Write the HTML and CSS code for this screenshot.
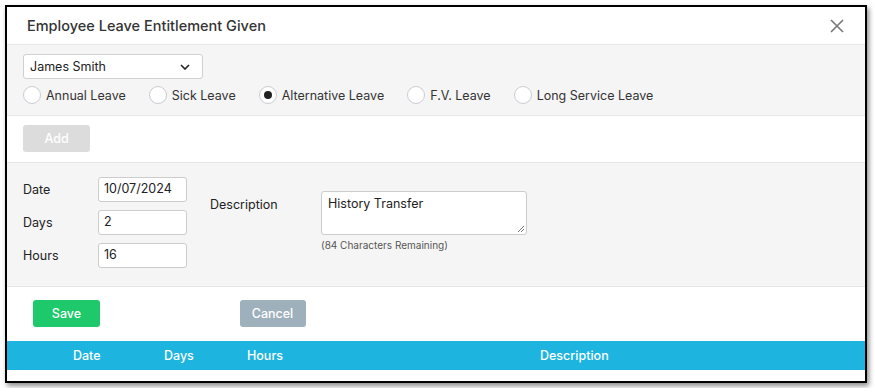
FILE: index.html
```html
<!DOCTYPE html>
<html lang="en">
<head>
    <meta charset="UTF-8">
    <title>Employee Leave Entitlement Given</title>
    <link rel="stylesheet" href="styles.css">
</head>
<body>

<div class="modal">
    <!-- Header -->
    <div class="modal-header">
        <div class="modal-title">Employee Leave Entitlement Given</div>
        <button class="close-button" aria-label="Close">
            <svg width="14" height="14" viewBox="0 0 14 14">
                <path d="M1 1 L13 13 M13 1 L1 13" stroke="#777" stroke-width="1.6" fill="none"/>
            </svg>
        </button>
    </div>

    <!-- Employee + leave type -->
    <div class="section section-gray select-section">
        <div class="select-box">
            <span>James Smith</span>
            <svg width="10" height="6" viewBox="0 0 10 6">
                <path d="M1 1 L5 5 L9 1" stroke="#222" stroke-width="1.6" fill="none"/>
            </svg>
        </div>
        <div class="radio-row">
            <label class="radio"><span class="radio-circle"></span>Annual Leave</label>
            <label class="radio"><span class="radio-circle"></span>Sick Leave</label>
            <label class="radio"><span class="radio-circle checked"></span>Alternative Leave</label>
            <label class="radio"><span class="radio-circle"></span>F.V. Leave</label>
            <label class="radio"><span class="radio-circle"></span>Long Service Leave</label>
        </div>
    </div>

    <div class="section add-section">
        <button class="btn btn-disabled">Add</button>
    </div>

    <!-- Entry form -->
    <div class="section section-gray form-section">
        <div class="field-column">
            <div class="field-row">
                <span class="field-label">Date</span>
                <div class="text-input">10/07/2024</div>
            </div>
            <div class="field-row">
                <span class="field-label">Days</span>
                <div class="text-input">2</div>
            </div>
            <div class="field-row">
                <span class="field-label">Hours</span>
                <div class="text-input">16</div>
            </div>
        </div>
        <div class="description-block">
            <span class="field-label description-label">Description</span>
            <div>
                <div class="textarea">
                    History Transfer
                    <svg class="resize-grip" width="7" height="7" viewBox="0 0 7 7">
                        <path d="M7 1 L1 7 M7 4 L4 7" stroke="#777" stroke-width="1" fill="none"/>
                    </svg>
                </div>
                <div class="helper-text">(84 Characters Remaining)</div>
            </div>
        </div>
    </div>

    <div class="section action-section">
        <button class="btn btn-save">Save</button>
        <button class="btn btn-cancel">Cancel</button>
    </div>

    <!-- Table header -->
    <div class="table-head">
        <div class="th th-date">Date</div>
        <div class="th">Days</div>
        <div class="th">Hours</div>
        <div class="th">Description</div>
    </div>
    <div class="table-body"></div>
</div>

</body>
</html>
```

FILE: styles.css
```css
body, html {
    margin: 0;
    background-color: #fff;
    font-family: Inter, "Liberation Sans", Arial, sans-serif;
    color: #222;
}

body {
    padding: 5px;
}

/* Modal */
.modal {
    width: 862px;
    height: 378px;
    box-sizing: border-box;
    border: 2px solid #000;
    background: #fff;
    box-shadow: 2px 3px 5px rgba(0, 0, 0, 0.45);
    overflow: hidden;
}

.modal-header {
    display: flex;
    align-items: center;
    justify-content: space-between;
    height: 37px;
    padding: 0 20px 0 20px;
    border-bottom: 1px solid #e6e6e6;
}

.modal-title {
    font-size: 14.5px;
    font-weight: 500;
    color: #333;
}

.close-button {
    border: none;
    background: none;
    padding: 0;
    margin-right: 1px;
    display: flex;
}

/* Sections */
.section {
    border-bottom: 1px solid #e6e6e6;
}

.section-gray {
    background: #f5f5f5;
}

.select-section {
    padding: 9px 16px 11px;
}

.select-box {
    width: 180px;
    height: 25px;
    box-sizing: border-box;
    display: flex;
    align-items: center;
    justify-content: space-between;
    padding: 0 12px 0 6px;
    border: 1px solid #d0d0d0;
    border-radius: 3px;
    background: #fff;
    font-size: 12.5px;
}

.radio-row {
    display: flex;
    gap: 23px;
    margin-top: 7px;
}

.radio {
    display: flex;
    align-items: center;
    font-size: 12.5px;
    color: #333;
}

.radio-circle {
    width: 18px;
    height: 18px;
    box-sizing: border-box;
    border: 1px solid #c8ccd2;
    border-radius: 50%;
    background: #fff;
    margin-right: 5px;
    position: relative;
}

.radio-circle.checked::after {
    content: "";
    position: absolute;
    top: 4px;
    left: 4px;
    width: 8px;
    height: 8px;
    border-radius: 50%;
    background: #222;
}

.add-section {
    padding: 9px 16px 10px;
}

/* Buttons */
.btn {
    height: 27px;
    width: 67px;
    border: none;
    border-radius: 3px;
    color: #fff;
    font-family: inherit;
    font-size: 12.5px;
    font-weight: 500;
    padding: 0;
}

.btn-disabled {
    background: #dcdcdc;
}

.btn-save {
    background: #1dc96a;
}

.btn-cancel {
    width: 66px;
    background: #9eb0bc;
    margin-left: 135px;
}

/* Form */
.form-section {
    display: flex;
    padding: 14px 16px 18px;
}

.field-column {
    display: flex;
    flex-direction: column;
    gap: 8px;
}

.field-row {
    display: flex;
    align-items: center;
}

.field-label {
    font-size: 12.5px;
    color: #222;
    width: 75px;
}

.text-input {
    width: 89px;
    height: 25px;
    box-sizing: border-box;
    padding: 3px 5px 0;
    border: 1px solid #ccc;
    border-radius: 3px;
    background: #fff;
    font-size: 12.5px;
}

.description-block {
    display: flex;
    margin-left: 23px;
    padding-top: 14px;
}

.description-label {
    width: 111px;
    padding-top: 6px;
}

.textarea {
    width: 206px;
    height: 44px;
    box-sizing: border-box;
    padding: 4px 6px;
    border: 1px solid #ccc;
    border-radius: 3px;
    background: #fff;
    font-size: 12.5px;
    position: relative;
}

.resize-grip {
    position: absolute;
    right: 2px;
    bottom: 2px;
}

.helper-text {
    font-size: 10px;
    color: #555;
    margin-top: 4px;
}

.action-section {
    border-bottom: none;
    padding: 13px 26px 14px;
}

/* Table */
.table-head {
    display: grid;
    grid-template-columns: 157px 83px 293px 1fr;
    height: 29px;
    align-items: center;
    background: #1db5e0;
}

.th {
    color: #fff;
    font-size: 12.5px;
    font-weight: 500;
}

.th-date {
    padding-left: 66px;
}
```
